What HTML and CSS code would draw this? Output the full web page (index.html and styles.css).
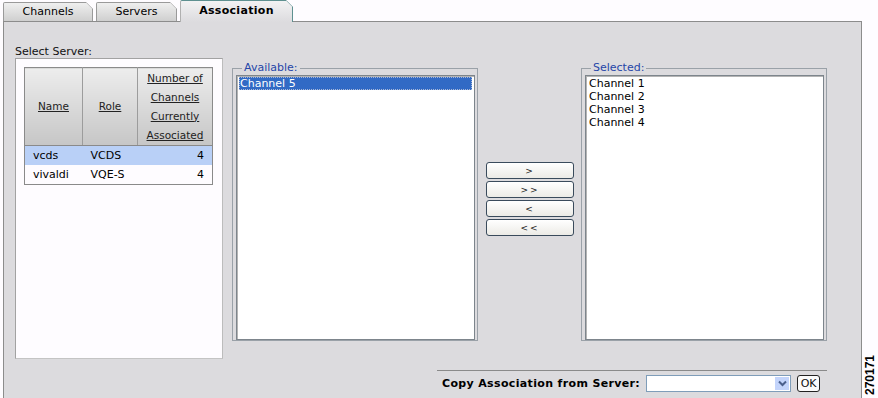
FILE: index.html
```html
<!DOCTYPE html>
<html lang="en">
<head>
    <meta charset="UTF-8">
    <title>Association</title>
    <link rel="stylesheet" href="styles.css">
</head>
<body>
    <div class="page">
        <div class="main">
            <div class="tabs">
                <div class="tab">Channels</div>
                <div class="tab">Servers</div>
                <div class="tab active">Association</div>
            </div>
            <div class="panel">
                <div class="content">
                    <div class="top">
                        <div class="server">
                            <div class="label">Select Server:</div>
                            <div class="server-box">
                                <table class="servers">
                                    <tr>
                                        <th class="col-name"><u>Name</u></th>
                                        <th class="col-role"><u>Role</u></th>
                                        <th class="col-num"><u>Number of</u><br><u>Channels</u><br><u>Currently</u><br><u>Associated</u></th>
                                    </tr>
                                    <tr class="picked">
                                        <td>vcds</td>
                                        <td>VCDS</td>
                                        <td class="num">4</td>
                                    </tr>
                                    <tr>
                                        <td>vivaldi</td>
                                        <td>VQE-S</td>
                                        <td class="num">4</td>
                                    </tr>
                                </table>
                            </div>
                        </div>
                        <div class="assoc">
                            <fieldset class="group">
                                <legend>Available:</legend>
                                <div class="listbox">
                                    <div class="option current">Channel 5</div>
                                </div>
                            </fieldset>
                            <div class="movers">
                                <button>&gt;</button>
                                <button>&gt;&gt;</button>
                                <button>&lt;</button>
                                <button>&lt;&lt;</button>
                            </div>
                            <fieldset class="group">
                                <legend>Selected:</legend>
                                <div class="listbox">
                                    <div class="option">Channel 1</div>
                                    <div class="option">Channel 2</div>
                                    <div class="option">Channel 3</div>
                                    <div class="option">Channel 4</div>
                                </div>
                            </fieldset>
                        </div>
                    </div>
                    <div class="copy">
                        <span class="copy-label">Copy Association from Server:</span>
                        <div class="select">
                            <span class="arrow">
                                <svg width="9" height="7" viewBox="0 0 9 7"><path d="M1 1.5 L4.5 5 L8 1.5" fill="none" stroke="#4a5f8c" stroke-width="2"/></svg>
                            </span>
                        </div>
                        <button class="ok">OK</button>
                    </div>
                </div>
            </div>
        </div>
        <div class="figno">270171</div>
    </div>
</body>
</html>
```

FILE: styles.css
```css
body {
    margin: 0;
    background-color: #fefcff;
    font-family: "DejaVu Sans", Verdana, sans-serif;
    font-size: 11px;
    color: #000;
}
.page {
    display: flex;
    height: 398px;
    overflow: hidden;
}
.main {
    width: 862px;
    display: flex;
    flex-direction: column;
}
.tabs {
    display: flex;
    align-items: flex-end;
    gap: 3px;
    height: 21px;
    padding-left: 3px;
}
.tab {
    height: 18px;
    line-height: 18px;
    text-align: center;
    border: 1px solid #9a9a9a;
    border-bottom: none;
    border-radius: 2px 0 0 0;
    clip-path: polygon(0 0, calc(100% - 7px) 0, 100% 7px, 100% 100%, 0 100%);
    background:
        linear-gradient(to bottom left, transparent calc(50% - 0.8px), #9a9a9a 50%, transparent calc(50% + 0.8px)) top right / 7px 7px no-repeat border-box,
        linear-gradient(#efefef, #cfcfcf);
}
.tab:nth-child(1) { width: 88px; }
.tab:nth-child(2) { width: 79px; }
.tab.active {
    width: 111px;
    height: 21px;
    line-height: 20px;
    margin-bottom: -1px;
    position: relative;
    z-index: 1;
    font-weight: bold;
    letter-spacing: 0.3px;
    border-top-color: #5e9090;
    border-right-color: #5e9090;
    border-left-color: #b0b0b0;
    background:
        linear-gradient(to bottom left, transparent calc(50% - 0.8px), #5e9090 50%, transparent calc(50% + 0.8px)) top right / 7px 7px no-repeat border-box,
        linear-gradient(#f2f2f3, #dcdbde);
}
.panel {
    flex: 1;
    margin-left: 3px;
    border: 1px solid #8c8c8c;
    border-bottom: none;
    background-color: #dcdbde;
    padding: 23px 0 0 11px;
}
.content {
    width: 812px;
    display: flex;
    flex-direction: column;
}
.top {
    display: flex;
    align-items: flex-start;
}
.server {
    width: 208px;
    margin-right: 9px;
}
.label {
    height: 13px;
    line-height: 13px;
    color: #111;
}
.server-box {
    height: 301px;
    box-sizing: border-box;
    background-color: #fefcff;
    border: 1px solid #a2a2a2;
    border-right-color: #bcbcbc;
    border-bottom-color: #c4c4c4;
    padding: 8px 0 0 8px;
}
.servers {
    width: 189px;
    border-collapse: collapse;
    border: 1px solid #8a8a8a;
    font-size: 11px;
}
.servers th {
    height: 77px;
    padding: 0;
    font-size: 10.5px;
    font-weight: normal;
    line-height: 19px;
    color: #222;
    background: linear-gradient(#ededed, #c6c6c6);
    border-left: 1px solid #9c9c9c;
    border-bottom: 1px solid #8a8a8a;
}
.servers th.col-name { width: 57px; border-left: none; }
.servers th.col-role { width: 54px; }
.servers td {
    height: 19px;
    padding: 0 0 0 8px;
    white-space: nowrap;
}
.servers td.num {
    text-align: right;
    padding-right: 8px;
}
.servers tr.picked td {
    background-color: #b9d0f7;
}
.assoc {
    display: flex;
    align-items: flex-start;
    margin-top: 17px;
}
.group {
    width: 246px;
    height: 279px;
    box-sizing: border-box;
    margin: 0;
    padding: 1px 2px 0 3px;
    border: 1px solid #9aa1a8;
}
.group legend {
    margin-left: 6px;
    padding: 0 2px;
    line-height: 12px;
    color: #2646a8;
}
.listbox {
    height: 265px;
    box-sizing: border-box;
    background-color: #fff;
    border: 1px solid #7d858c;
    box-shadow: inset 1px 1px 0 #b4b4b4;
    padding: 1px 2px;
}
.option {
    height: 13px;
    line-height: 13px;
    padding-left: 1px;
}
.option.current {
    background-color: #316ac5;
    color: #fff;
    outline: 1px dotted #a8b8d8;
    outline-offset: -1px;
}
.movers {
    width: 88px;
    margin: 100px 7px 0 8px;
    display: flex;
    flex-direction: column;
    gap: 2px;
}
button {
    height: 17px;
    padding: 0;
    font-family: "DejaVu Sans", Verdana, sans-serif;
    font-size: 9px;
    letter-spacing: 2px;
    color: #222;
    background: linear-gradient(#ffffff, #ecebe6);
    border: 1px solid #3a4b5c;
    border-radius: 3px;
}
.copy {
    align-self: flex-end;
    width: 390px;
    margin-top: 11px;
    border-top: 1px solid #8a8a8a;
    padding: 4px 0 0 5px;
    box-sizing: border-box;
    display: flex;
    align-items: center;
}
.copy-label {
    font-weight: bold;
    letter-spacing: 0.35px;
    margin-right: 6px;
    white-space: nowrap;
}
.select {
    width: 145px;
    height: 17px;
    box-sizing: border-box;
    background-color: #fff;
    border: 1px solid #7f9db9;
    display: flex;
    justify-content: flex-end;
    padding: 1px;
}
.arrow {
    width: 14px;
    height: 13px;
    background-color: #c3d4fb;
    display: flex;
    align-items: center;
    justify-content: center;
}
.ok {
    width: 23px;
    margin-left: 6px;
    font-size: 11px;
    letter-spacing: 0;
    color: #111;
    background: #fbfbfb;
    border-color: #222;
}
.figno {
    width: 16px;
    display: flex;
    writing-mode: vertical-rl;
    transform: rotate(180deg);
    justify-content: flex-start;
    align-items: center;
    padding-top: 3px;
    font-family: "Liberation Sans", Arial, sans-serif;
    font-size: 12px;
    font-weight: bold;
    box-sizing: border-box;
}
```
